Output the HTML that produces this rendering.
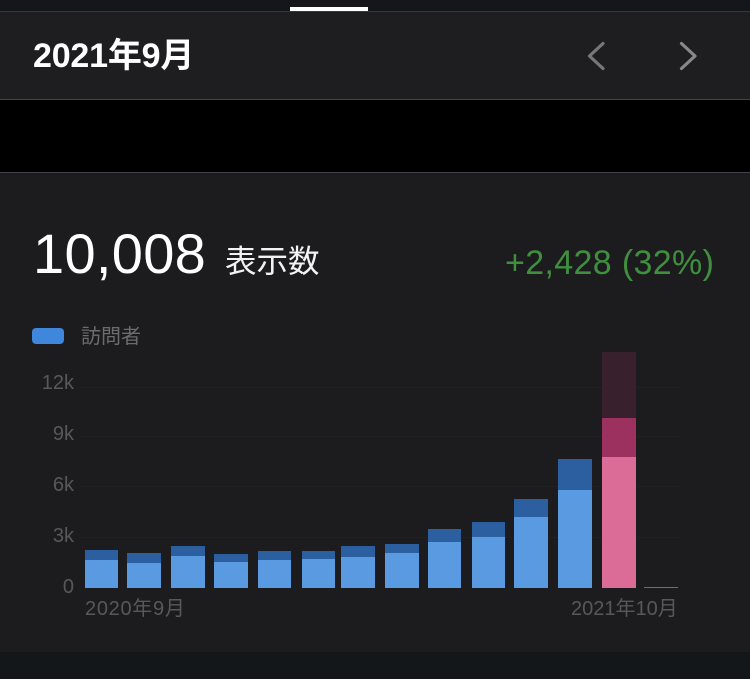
<!DOCTYPE html>
<html lang="ja"><head><meta charset="utf-8">
<style>
html,body{margin:0;padding:0;background:#1c1c1e}
body{position:relative;width:750px;height:679px;overflow:hidden;font-family:"Liberation Sans","Noto Sans CJK JP",sans-serif}
.a{position:absolute}
.t{position:absolute;white-space:nowrap;line-height:1}
.y{position:absolute;right:676px;font-size:20px;line-height:1;color:#58585c;white-space:nowrap}
.g{position:absolute;left:80px;width:600px;height:1px;background:#212123}
.b{position:absolute}
</style></head><body>
<div class="a" style="left:0;top:0;width:750px;height:11px;background:#13161a"></div>
<div class="a" style="left:290px;top:7px;width:78px;height:4px;background:#fff"></div>
<div class="a" style="left:0;top:11px;width:750px;height:1px;background:#37373b"></div>
<div class="a" style="left:0;top:12px;width:750px;height:87px;background:#1e1e20"></div>
<div class="a" style="left:0;top:99px;width:750px;height:1px;background:#434347"></div>
<div class="a" style="left:0;top:100px;width:750px;height:72px;background:#000"></div>
<div class="a" style="left:0;top:172px;width:750px;height:1px;background:#434347"></div>
<div class="a" style="left:0;top:173px;width:750px;height:479px;background:#1c1c1e"></div>
<div class="a" style="left:0;top:652px;width:750px;height:27px;background:#14171a"></div>

<div class="t" style="left:33px;top:39px;font-size:34px;font-weight:700;color:#fff;letter-spacing:-.2px">2021年9月</div>
<svg class="a" style="left:580px;top:36px" width="125" height="40" viewBox="0 0 125 40" fill="none">
<path d="M23 7.500L9.500 20L23 32.500" stroke="#77777b" stroke-width="3.200" stroke-linecap="round" stroke-linejoin="round"/>
<path d="M101.500 7.500L115 20L101.500 32.500" stroke="#88888c" stroke-width="3.200" stroke-linecap="round" stroke-linejoin="round"/>
</svg>

<div class="t" style="left:33px;top:226px;font-size:56px;color:#fff;letter-spacing:.3px">10,008</div>
<div class="t" style="left:225px;top:246px;font-size:31.500px;color:#f2f2f2">表示数</div>
<div class="t" style="left:505px;top:246px;font-size:34px;color:#3f8f3f;letter-spacing:.35px">+2,428 (32%)</div>

<div class="a" style="left:32px;top:328px;width:32px;height:16px;border-radius:4px;background:#3f87dc"></div>
<div class="t" style="left:81px;top:327px;font-size:20px;color:#6c6c70">訪問者</div>

<div class="g" style="top:387px"></div>
<div class="g" style="top:436px"></div>
<div class="g" style="top:486px"></div>
<div class="g" style="top:537px"></div>
<div class="y" style="top:373px">12k</div>
<div class="y" style="top:424px">9k</div>
<div class="y" style="top:475px">6k</div>
<div class="y" style="top:526px">3k</div>
<div class="y" style="top:577px">0</div>

<div class="b" style="left:85px;top:550px;width:33px;height:10px;background:#2c5f9f"></div><div class="b" style="left:85px;top:560px;width:33px;height:28px;background:#5a9ae0"></div>
<div class="b" style="left:127px;top:553px;width:34px;height:10px;background:#2c5f9f"></div><div class="b" style="left:127px;top:563px;width:34px;height:25px;background:#5a9ae0"></div>
<div class="b" style="left:171px;top:546px;width:34px;height:10px;background:#2c5f9f"></div><div class="b" style="left:171px;top:556px;width:34px;height:32px;background:#5a9ae0"></div>
<div class="b" style="left:214px;top:554px;width:34px;height:8px;background:#2c5f9f"></div><div class="b" style="left:214px;top:562px;width:34px;height:26px;background:#5a9ae0"></div>
<div class="b" style="left:258px;top:551px;width:33px;height:9px;background:#2c5f9f"></div><div class="b" style="left:258px;top:560px;width:33px;height:28px;background:#5a9ae0"></div>
<div class="b" style="left:302px;top:551px;width:33px;height:8px;background:#2c5f9f"></div><div class="b" style="left:302px;top:559px;width:33px;height:29px;background:#5a9ae0"></div>
<div class="b" style="left:341px;top:546px;width:34px;height:11px;background:#2c5f9f"></div><div class="b" style="left:341px;top:557px;width:34px;height:31px;background:#5a9ae0"></div>
<div class="b" style="left:385px;top:544px;width:34px;height:9px;background:#2c5f9f"></div><div class="b" style="left:385px;top:553px;width:34px;height:35px;background:#5a9ae0"></div>
<div class="b" style="left:428px;top:529px;width:33px;height:13px;background:#2c5f9f"></div><div class="b" style="left:428px;top:542px;width:33px;height:46px;background:#5a9ae0"></div>
<div class="b" style="left:472px;top:522px;width:33px;height:15px;background:#2c5f9f"></div><div class="b" style="left:472px;top:537px;width:33px;height:51px;background:#5a9ae0"></div>
<div class="b" style="left:514px;top:499px;width:34px;height:18px;background:#2c5f9f"></div><div class="b" style="left:514px;top:517px;width:34px;height:71px;background:#5a9ae0"></div>
<div class="b" style="left:558px;top:459px;width:34px;height:31px;background:#2c5f9f"></div><div class="b" style="left:558px;top:490px;width:34px;height:98px;background:#5a9ae0"></div>
<div class="b" style="left:602px;top:352px;width:34px;height:66px;background:#38202d"></div><div class="b" style="left:602px;top:418px;width:34px;height:39px;background:#9c305f"></div><div class="b" style="left:602px;top:457px;width:34px;height:131px;background:#db6c97"></div>
<div class="b" style="left:644px;top:587px;width:34px;height:1px;background:#3f78b4"></div>

<div class="t" style="left:85px;top:599px;font-size:20px;color:#58585c;letter-spacing:.7px">2020年9月</div>
<div class="t" style="left:571px;top:599px;font-size:20px;color:#58585c">2021年10月</div>
</body></html>
